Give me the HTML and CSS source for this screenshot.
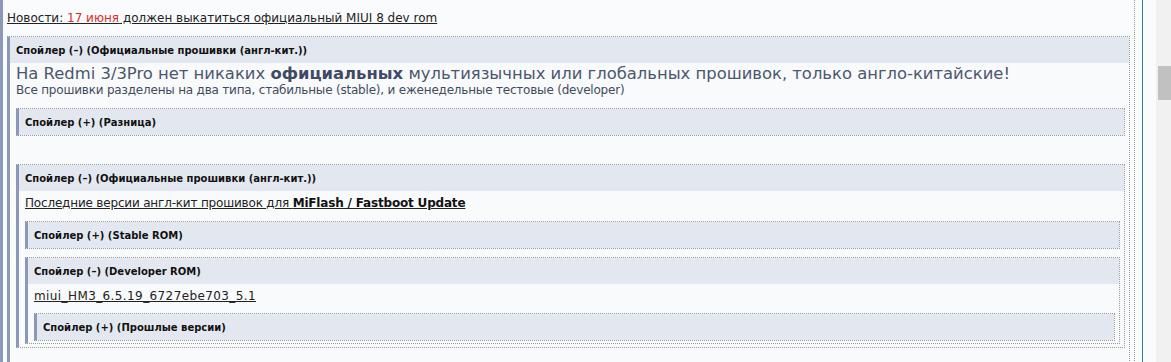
FILE: index.html
```html
<!DOCTYPE html>
<html lang="ru">
<head>
    <meta charset="UTF-8">
    <title>Прошивки Redmi 3</title>
    <link rel="stylesheet" href="styles.css">
</head>
<body>
    <div class="main">
        <div class="post">
            <div class="outer">
                <p class="news"><a href="#">Новости: <span class="date">17 июня</span> должен выкатиться официальный MIUI 8 dev rom</a></p>

                <div class="spoiler">
                    <div class="sp-head">Спойлер (–) (Официальные прошивки (англ-кит.))</div>
                    <div class="sp-body">
                        <p class="lead">На Redmi 3/3Pro нет никаких <b>официальных</b> мультиязычных или глобальных прошивок, только англо-китайские!</p>
                        <p class="note">Все прошивки разделены на два типа, стабильные (stable), и еженедельные тестовые (developer)</p>

                        <div class="spoiler closed diff">
                            <div class="sp-head">Спойлер (+) (Разница)</div>
                        </div>

                        <div class="spoiler second">
                            <div class="sp-head">Спойлер (–) (Официальные прошивки (англ-кит.))</div>
                            <div class="sp-body">
                                <p class="line"><a href="#">Последние версии англ-кит прошивок для <b>MiFlash / Fastboot Update</b></a></p>

                                <div class="spoiler closed">
                                    <div class="sp-head">Спойлер (+) (Stable ROM)</div>
                                </div>

                                <div class="spoiler dev">
                                    <div class="sp-head">Спойлер (–) (Developer ROM)</div>
                                    <div class="sp-body">
                                        <p class="line file"><a href="#">miui_HM3_6.5.19_6727ebe703_5.1</a></p>
                                        <div class="spoiler closed">
                                            <div class="sp-head">Спойлер (+) (Прошлые версии)</div>
                                        </div>
                                    </div>
                                </div>
                            </div>
                        </div>
                    </div>
                </div>
            </div>
        </div>
    </div>
    <div class="gutter"></div>
    <div class="scrollbar">
        <div class="thumb"></div>
    </div>
</body>
</html>
```

FILE: styles.css
```css
html, body {
    height: 100%;
}

body {
    margin: 0;
    display: flex;
    overflow: hidden;
    background: #fafbfd;
    font-family: 'DejaVu Sans', Verdana, sans-serif;
    font-size: 12px;
    color: #222;
}

p {
    margin: 0;
}

a {
    color: #222;
    text-decoration: underline;
}

.main {
    width: 1143px;
    flex: none;
    box-sizing: border-box;
    border-right: 1px solid #3b74b2;
    padding-right: 7px;
}

.gutter {
    flex: 1;
}

.scrollbar {
    width: 15px;
    flex: none;
    background: #f1f1f1;
    padding: 66px 0 0 2px;
    box-sizing: border-box;
}

.thumb {
    height: 34px;
    background: #c1c1c1;
}

/* внешний блок, шапка которого уже прокручена */
.outer {
    border-left: 3px solid #8b98b7;
    border-right: 1px dotted #9a9a9a;
    padding: 10px 4px 0 4px;
    min-height: 400px;
}

.news {
    line-height: 16px;
    margin-bottom: 10px;
}

.news .date {
    color: #dd2b2b;
}

/* спойлеры */
.spoiler {
    border: 1px dotted #9a9a9a;
    border-left: 3px solid #8b98b7;
    background: #f9fafc;
}

.sp-head {
    height: 24px;
    line-height: 24px;
    padding: 2px 0 0 6px;
    background: #e3e8f0;
    font-size: 10px;
    font-weight: bold;
    color: #111;
    white-space: nowrap;
}

.sp-body {
    padding: 0 4px 2px 6px;
}

.outer > .spoiler {
    border-bottom: none;
    min-height: 400px;
}

.lead {
    font-size: 16.4px;
    line-height: 20px;
    margin-top: 1px;
    color: #4b576f;
}

.lead b {
    color: #3f4b66;
}

.note {
    line-height: 13px;
    letter-spacing: -0.2px;
    color: #414b5f;
}

.line {
    line-height: 16px;
    margin-top: 4px;
    letter-spacing: -0.18px;
}

.line.file {
    letter-spacing: 0.4px;
}

.line b {
    color: #111;
}

.spoiler.diff {
    margin-top: 11px;
}

.spoiler.second {
    margin-top: 28px;
    margin-bottom: 3px;
}

.second > .sp-body {
    padding-bottom: 3px;
}

.sp-body .line + .spoiler {
    margin-top: 10px;
}

.spoiler.dev {
    margin-top: 8px;
}

.dev .line + .spoiler {
    margin-top: 9px;
}
```
